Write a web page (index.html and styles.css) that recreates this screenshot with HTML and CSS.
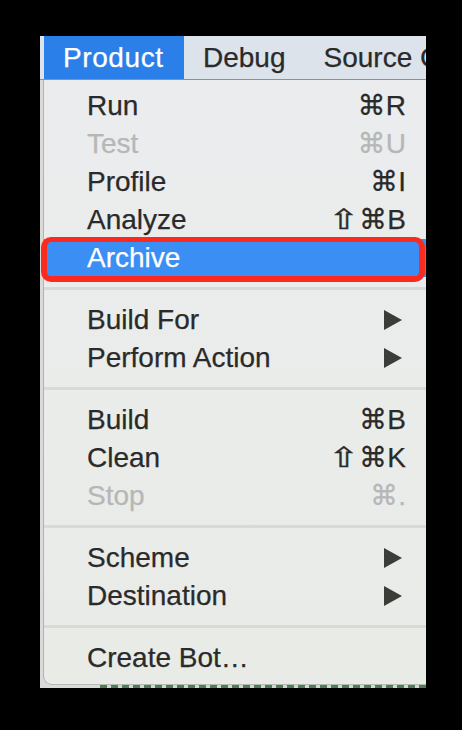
FILE: index.html
```html
<!DOCTYPE html>
<html>
<head>
<meta charset="utf-8">
<link rel="stylesheet" href="styles.css">
</head>
<body>
<div class="shot">
  <div class="menubar">
    <div class="mb-item active">Product</div>
    <div class="mb-item">Debug</div>
    <div class="mb-item">Source Control</div>
  </div>
  <div class="behind">
    <div class="panel">
      <div class="row"><span>Run</span><span class="key">⌘R</span></div>
      <div class="row disabled"><span>Test</span><span class="key">⌘U</span></div>
      <div class="row"><span>Profile</span><span class="key">⌘I</span></div>
      <div class="row"><span>Analyze</span><span class="key"><span class="shift">⇧</span>⌘B</span></div>
      <div class="row selected"><span>Archive</span><span class="key"></span><div class="mark"></div></div>
      <div class="sep"></div>
      <div class="row sub"><span>Build For</span><svg class="arrow" viewBox="0 0 18 20"><path d="M0 0L18 10L0 20Z"/></svg></div>
      <div class="row sub"><span>Perform Action</span><svg class="arrow" viewBox="0 0 18 20"><path d="M0 0L18 10L0 20Z"/></svg></div>
      <div class="sep"></div>
      <div class="row"><span>Build</span><span class="key">⌘B</span></div>
      <div class="row"><span>Clean</span><span class="key"><span class="shift">⇧</span>⌘K</span></div>
      <div class="row disabled"><span>Stop</span><span class="key">⌘.</span></div>
      <div class="sep"></div>
      <div class="row sub"><span>Scheme</span><svg class="arrow" viewBox="0 0 18 20"><path d="M0 0L18 10L0 20Z"/></svg></div>
      <div class="row sub"><span>Destination</span><svg class="arrow" viewBox="0 0 18 20"><path d="M0 0L18 10L0 20Z"/></svg></div>
      <div class="sep"></div>
      <div class="row"><span>Create Bot…</span><span class="key"></span></div>
    </div>
    <div class="under"></div>
  </div>
</div>
</body>
</html>
```
FILE: styles.css
```css
html, body {
  margin: 0;
  padding: 0;
  background: #000;
}
body {
  width: 462px;
  height: 730px;
  overflow: hidden;
  font-family: "Liberation Sans", "DejaVu Sans", sans-serif;
}
.shot {
  margin: 36px 0 0 40px;
  width: 386px;
  height: 652px;
  overflow: hidden;
  display: flex;
  flex-direction: column;
}
.menubar {
  height: 43px;
  border-bottom: 1px solid #8c9097;
  background: #dde3eb;
  display: flex;
  padding-left: 4px;
  white-space: nowrap;
  overflow: hidden;
  font-size: 28px;
  line-height: 43px;
  color: #2a2a2a;
  flex-shrink: 0;
  -webkit-text-stroke: 0.25px currentColor;
}
.mb-item {
  padding: 0 19px;
  flex-shrink: 0;
}
.mb-item.active {
  width: 140px;
  box-sizing: border-box;
  background: #2a80e8;
  color: #fff;
  letter-spacing: 0.6px;
}
.behind {
  flex: 1;
  background: #dadada;
  display: flex;
  flex-direction: column;
}
.panel {
  margin-left: 3px;
  border-left: 1px solid #b2b2b2;
  border-bottom: 1px solid #b8b8b8;
  border-bottom-left-radius: 9px;
  background: linear-gradient(180deg, #ebecee 0%, #eaecea 60%, #e8ebe6 100%);
  padding: 7px 0 7px;
  font-size: 28px;
  color: #2a2a2a;
  -webkit-text-stroke: 0.25px currentColor;
}
.row {
  position: relative;
  height: 38px;
  line-height: 38px;
  display: flex;
  justify-content: space-between;
  align-items: center;
  padding: 0 20px 0 43px;
  white-space: nowrap;
}
.row.sub {
  padding-right: 24px;
}
.row.disabled {
  color: #b6b7b7;
}
.row.selected {
  background: #3b8ef4;
  color: #fff;
}
.key {
  display: flex;
  align-items: center;
}
.shift {
  display: inline-block;
  margin-right: 4px;
  transform: scaleX(1.3);
  -webkit-text-stroke: 0.4px currentColor;
}
.arrow {
  width: 18px;
  height: 20px;
  fill: #3b3d39;
}
.mark {
  position: absolute;
  left: -3px;
  right: 1px;
  top: -2px;
  bottom: -5px;
  border-style: solid;
  border-color: #fb2a1e;
  border-width: 5px 6px 6px 6px;
  border-radius: 10px;
}
.sep {
  height: 3px;
  margin: 10px 0 11px;
  background: #d8dad8;
}
.under {
  height: 3px;
  margin-left: 60px;
  background: repeating-linear-gradient(90deg, #4d7f55 0 7px, #d3d8d3 7px 11px);
}
```
